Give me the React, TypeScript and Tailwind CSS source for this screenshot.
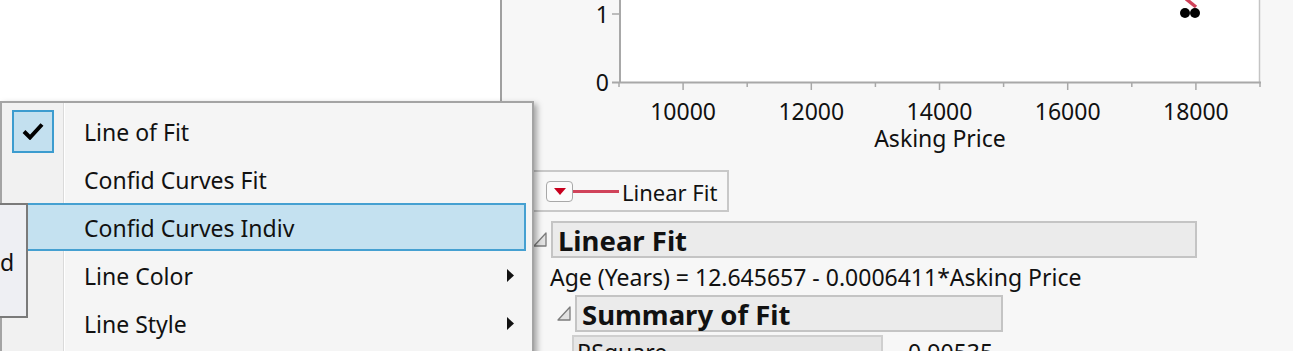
import React from "react"

const font = { fontFamily: '"Noto Sans", "Open Sans", sans-serif' }

// x position for a price value on the plot
const px = (v: number) => 619 + ((v - 9000) / 1000) * 64.1

function Plot() {
  const ticks = [9000, 10000, 11000, 12000, 13000, 14000, 15000, 16000, 17000, 18000, 19000]
  const labels = [10000, 12000, 14000, 16000, 18000]
  return (
    <svg width={791} height={160} viewBox="502 0 791 160" className="block shrink-0" fontFamily='"Noto Sans", sans-serif'>
      <rect x={621} y={0} width={638} height={82} fill="#ffffff" />
      <line x1={620} y1={0} x2={620} y2={83} stroke="#a8a8a8" strokeWidth={2} />
      <line x1={1259.5} y1={0} x2={1259.5} y2={83} stroke="#c4c4c4" strokeWidth={1.5} />
      <line x1={612} y1={82.5} x2={1261} y2={82.5} stroke="#a8a8a8" strokeWidth={2} />
      <line x1={612} y1={14} x2={620} y2={14} stroke="#a8a8a8" strokeWidth={1.5} />
      {ticks.map((t) => (
        <line key={t} x1={px(t)} y1={83} x2={px(t)} y2={t % 2000 === 0 ? 90 : 87} stroke="#a8a8a8" strokeWidth={1.5} />
      ))}
      <text x={609} y={23} fontSize={23} textAnchor="end" fill="#111">1</text>
      <text x={609} y={91} fontSize={23} textAnchor="end" fill="#111">0</text>
      {labels.map((l) => (
        <text key={l} x={px(l)} y={120} fontSize={23} textAnchor="middle" fill="#111">
          {l}
        </text>
      ))}
      <text x={940} y={147} fontSize={23} textAnchor="middle" fill="#111">Asking Price</text>
      <line x1={1186} y1={-1} x2={1196} y2={7} stroke="#d0435a" strokeWidth={3.5} />
      <circle cx={1185} cy={13} r={5} fill="#000" />
      <circle cx={1195} cy={13} r={5} fill="#000" />
    </svg>
  )
}

function Disclosure() {
  return (
    <svg width={14} height={15} viewBox="0 0 14 15" className="shrink-0">
      <polygon points="1,14 13,14 13,1" fill="#e2e2e2" stroke="#7c7c7c" strokeWidth={1.3} strokeLinejoin="round" />
    </svg>
  )
}

function SubArrow() {
  return (
    <svg width={7} height={13} viewBox="0 0 7 13" className="shrink-0">
      <polygon points="0,0 7,6.5 0,13" fill="#111" />
    </svg>
  )
}

function MenuRow({ label, checked, active, sub }: { label: string; checked?: boolean; active?: boolean; sub?: boolean }) {
  return (
    <div
      className={
        active
          ? "mr-[6px] flex h-[48px] items-center border-2 border-[#45a0d1] bg-[#c4e1f0] pr-[12px]"
          : "flex h-[48px] items-center pr-[18px]"
      }
    >
      <div className={active ? "flex w-[80px] shrink-0 items-center" : "flex w-[82px] shrink-0 items-center"}>
        {checked && (
          <div className="ml-[10px] flex h-[43px] w-[42px] items-center justify-center border-2 border-[#3c9ccf] bg-[#c3e0ef]">
            <svg width={22} height={18} viewBox="0 0 22 18">
              <path d="M2 9.5 L8 15.5 L20 2.5" fill="none" stroke="#000" strokeWidth={4} strokeLinejoin="miter" />
            </svg>
          </div>
        )}
      </div>
      <span className="flex-1 pt-[3px] text-[23px] leading-none text-[#111]">{label}</span>
      {sub && <SubArrow />}
    </div>
  )
}

export default function App() {
  return (
    <div className="relative flex h-[351px] w-[1293px] overflow-hidden bg-white" style={font}>
      {/* blank left area */}
      <div className="w-[500px] shrink-0" />

      {/* report window */}
      <div className="flex flex-1 flex-col border-l-2 border-[#a0a0a0] bg-[#f7f7f7]">
        <Plot />

        {/* legend */}
        <div className="mt-[10px] ml-[26px] flex h-[42px] w-[201px] shrink-0 items-center border-2 border-[#c8c8c8] pl-[16px]">
          <div className="flex h-[21px] w-[27px] items-center justify-center rounded-[4px] border border-[#a8a8a8] bg-[#fbfbfb]">
            <svg width={12} height={7} viewBox="0 0 12 7">
              <polygon points="0,0 12,0 6,7" fill="#c8001e" />
            </svg>
          </div>
          <div className="h-[3px] w-[46px] bg-[#d0435a]" />
          <span className="ml-[3px] pt-[2px] text-[22px] leading-none text-[#111]">Linear Fit</span>
        </div>

        {/* Linear Fit header */}
        <div className="mt-[9px] ml-[31px] flex shrink-0 items-center gap-[4px]">
          <Disclosure />
          <div className="flex h-[37px] w-[646px] items-center border-2 border-[#c4c4c4] bg-[#ebebeb] pl-[5px]">
            <span className="pt-[3px] text-[27.5px] font-bold leading-none text-[#111]">Linear Fit</span>
          </div>
        </div>

        <div className="ml-[48px] flex h-[37px] shrink-0 items-center pt-[2px] text-[23px] leading-none text-[#111]">
          Age (Years) = 12.645657 - 0.0006411*Asking Price
        </div>

        {/* Summary of Fit header */}
        <div className="ml-[55px] flex shrink-0 items-center gap-[4px]">
          <Disclosure />
          <div className="flex h-[37px] w-[428px] items-center border-2 border-[#c4c4c4] bg-[#ebebeb] pl-[5px]">
            <span className="pt-[3px] text-[27.5px] font-bold leading-none text-[#111]">Summary of Fit</span>
          </div>
        </div>

        <div className="mt-[3px] ml-[70px] flex shrink-0 items-center">
          <div className="flex h-[34px] w-[311px] shrink-0 items-center border-2 border-[#cfcfcf] bg-[#e6e6e6] pl-[3px] text-[23px] text-[#111]">
            RSquare
          </div>
          <span className="ml-[25px] text-[23px] text-[#111]">0.90535</span>
        </div>
      </div>

      {/* popup menu */}
      <div className="absolute top-[101px] left-0 h-[262px] w-[534px] border-2 border-[#a4a4a4] bg-[linear-gradient(to_right,#f1f1f1_0px,#f1f1f1_61px,#dadada_61px,#dadada_62px,#ffffff_62px,#ffffff_63px,#f5f5f5_63px)] pt-[4px] shadow-[3px_3px_6px_rgba(0,0,0,0.35)]">
        <MenuRow label="Line of Fit" checked />
        <MenuRow label="Confid Curves Fit" />
        <MenuRow label="Confid Curves Indiv" active />
        <MenuRow label="Line Color" sub />
        <MenuRow label="Line Style" sub />
      </div>

      {/* partially hidden submenu behind */}
      <div className="absolute top-[203px] left-0 flex h-[115px] w-[28px] items-center overflow-hidden border-2 border-l-0 border-[#7a7a7a] bg-[#eeeff3] pt-[4px] text-[23px] text-[#111]">
        d
      </div>
    </div>
  )
}
